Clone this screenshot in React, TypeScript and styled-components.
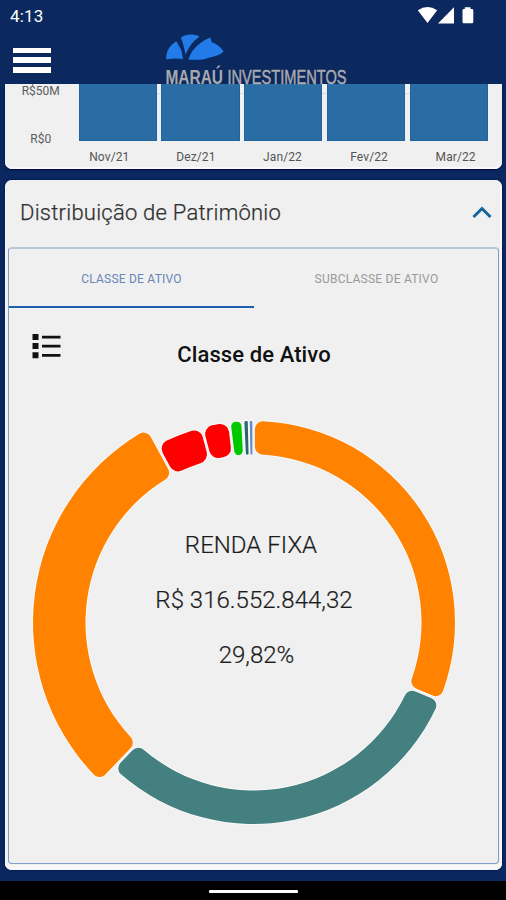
import React from 'react';
import styled, { createGlobalStyle } from 'styled-components';

const GlobalStyle = createGlobalStyle`
  * { box-sizing: border-box; }
  body { margin: 0; background: #0a285f; font-family: Roboto, "Liberation Sans", sans-serif; }
`;

const Screen = styled.div`
  width: 506px;
  height: 900px;
  display: flex;
  flex-direction: column;
  overflow: hidden;
  background: #0a285f;
`;

const Header = styled.header`
  position: relative;
  z-index: 1;
  flex: none;
  height: 84px;
  display: flex;
  flex-direction: column;
  background: #0b295f;
`;

const StatusBar = styled.div`
  height: 32px;
  flex: none;
  display: flex;
  align-items: center;
  justify-content: space-between;
  padding: 0 31px 0 10px;
  color: #fff;
  font-size: 17px;
  font-weight: 400;
  line-height: 32px;
  letter-spacing: 0.2px;
`;

const AppBar = styled.div`
  display: grid;
  grid-template-columns: 153px 190px;
  padding-left: 12px;
  height: 60px;
`;

const MenuButton = styled.button`
  display: flex;
  flex-direction: column;
  gap: 4.6px;
  width: 38px;
  height: 42px;
  padding: 15.5px 0 0 0.5px;
  border: 0;
  background: none;
`;

const MenuLine = styled.span`
  flex: none;
  width: 38px;
  height: 5.4px;
  background: #fff;
`;

const Content = styled.main`
  flex: 1;
  display: flex;
  flex-direction: column;
  gap: 11px;
  padding: 0 4px 0 5px;
`;

const BarsCard = styled.section`
  height: 85px;
  flex: none;
  display: grid;
  grid-template-columns: 73.5px 409.5px;
  grid-template-rows: 57px 28px;
  background: #f0f0f0;
  border-radius: 0 0 7px 7px;
  box-shadow: 0 1px 2px #00063f, inset 0 -2px 0 #f8f8f8;
`;

const Axis = styled.div`
  display: flex;
  flex-direction: column;
  justify-content: space-between;
  align-items: center;
  padding: 1px 2px 0 0;
  height: 62px;
  color: #5c5c5c;
  font-size: 12px;
  line-height: 13px;
`;

const Plot = styled.div`
  display: flex;
  gap: 4.6px;
  background: linear-gradient(#d9dcdf, #d9dcdf) 0 9px / 100% 1px no-repeat;
`;

const Bar = styled.div`
  flex: 1;
  background: #2a6ca4;
  border: 1px solid #1f649e;
  border-top: 0;
`;

const Months = styled.div`
  grid-column: 1 / 3;
  display: grid;
  grid-template-columns: repeat(5, 86.6px);
  padding: 9px 0 0 61px;
  color: #555;
  font-size: 12px;
  line-height: 14px;
  letter-spacing: 0.1px;
  text-align: center;
`;

const Card = styled.section`
  height: 690px;
  flex: none;
  display: flex;
  flex-direction: column;
  padding: 0 3px 6px;
  background: #f0f0f0;
  border-radius: 7px;
  box-shadow: 0 0 2px #00063f, inset 0 -5px 0 #f8f8f8, inset 1px 0 0 #f8f8f8, inset -2px 0 0 #f8f8f8;
`;

const CardHeader = styled.div`
  height: 67px;
  flex: none;
  display: flex;
  align-items: center;
  justify-content: space-between;
  padding: 0 7px 2px 12px;
`;

const CardTitle = styled.h2`
  margin: 0;
  color: #303030;
  font-size: 22px;
  font-weight: 300;
  letter-spacing: 0.24px;
  -webkit-text-stroke: 0.25px #303030;
`;

const Panel = styled.div`
  flex: 1;
  display: flex;
  flex-direction: column;
  border: 1px solid #7f9dc6;
  border-top: 2px solid #b9c6dc;
  border-radius: 4px;
  background: #f0f0f0;
`;

const Tabs = styled.div`
  display: grid;
  grid-template-columns: 245px 245px;
  height: 59px;
  flex: none;
`;

const Tab = styled.div<{ $active?: boolean }>`
  display: flex;
  align-items: center;
  justify-content: center;
  padding-top: ${(p) => (p.$active ? 3 : 1)}px;
  border-bottom: ${(p) => (p.$active ? '2px solid #1d61ae' : '0')};
  color: ${(p) => (p.$active ? '#6884b8' : '#999')};
  font-size: 12px;
  letter-spacing: 0.23px;
`;

const ChartHeader = styled.div`
  height: 75px;
  flex: none;
  display: grid;
  grid-template-columns: 75px 340px 75px;
  padding-top: 24px;
`;

const ListButton = styled.button`
  width: 30px;
  height: 28px;
  margin-left: 23px;
  padding: 0;
  border: 0;
  background: none;
`;

const ChartTitle = styled.h3`
  margin: 0;
  padding-top: 10px;
  color: #111;
  font-size: 22px;
  font-weight: 500;
  line-height: 26px;
  letter-spacing: 0.1px;
  text-align: center;
`;

const Chart = styled.div`
  display: grid;
  width: 490px;
  height: 460px;
  > * { grid-area: 1 / 1; }
`;

const Summary = styled.div`
  display: flex;
  flex-direction: column;
  align-items: center;
  gap: 27px;
  padding-top: 148px;
  color: #1c1c1c;
  font-size: 24px;
  font-weight: 300;
  line-height: 28px;
  -webkit-text-stroke: 0.2px #1c1c1c;
`;

const SummaryLine = styled.span<{ $before?: number; $after?: number }>`
  letter-spacing: 0.02px;
  padding: 0 ${(p) => p.$after ?? 0}px 0 ${(p) => p.$before ?? 0}px;
`;

const NavBar = styled.footer`
  flex: none;
  height: 19px;
  display: flex;
  align-items: center;
  justify-content: center;
  background: #000;
  padding-top: 2px;
`;

const Handle = styled.div`
  width: 89px;
  height: 3px;
  border-radius: 1px;
  background: #fff;
`;

interface Segment {
  start: number;
  end: number;
  color: string;
  outer?: number;
  corner?: number;
  pad?: number;
}

const segments: Segment[] = [
  { start: 0, end: 112.6, color: '#ff8200' },
  { start: 112.6, end: 223.9, color: '#43807f' },
  { start: 223.9, end: 331.4, color: '#ff8200', outer: 220.5 },
  { start: 331.4, end: 345.1, color: '#ff0000', corner: 9 },
  { start: 345.1, end: 353.1, color: '#ff0000', corner: 9 },
  { start: 353.1, end: 356.9, color: '#00c800', corner: 4.5 },
  { start: 357.25, end: 358.5, color: '#2a6670', corner: 0.8, pad: 0.5 },
  { start: 358.85, end: 359.75, color: '#6888c8', corner: 0.5, pad: 0.3 },
];

const CX = 244.5;
const CY = 239.5;
const INNER = 168;

// Ring sector with rounded corners; angles run clockwise from twelve o'clock.
function sectorPath({ start, end, outer = 201.5, corner = 8, pad = 1.4 }: Segment) {
  const rad = Math.PI / 180;
  const point = (r: number, a: number) =>
    `${(CX + r * Math.sin(a)).toFixed(2)} ${(CY - r * Math.cos(a)).toFixed(2)}`;
  const side = (r: number, dir: number) => (dir > 0 ? start : end) * rad + dir * Math.asin(pad / r);
  const inset = (r: number, dir: number) => side(r, dir) + (dir * corner) / r;
  const large = end - start > 180 ? 1 : 0;
  const arc = `A${corner} ${corner} 0 0 1 `;
  return [
    `M${point(outer - corner, side(outer - corner, 1))}`,
    arc + point(outer, inset(outer, 1)),
    `A${outer} ${outer} 0 ${large} 1 ${point(outer, inset(outer, -1))}`,
    arc + point(outer - corner, side(outer - corner, -1)),
    `L${point(INNER + corner, side(INNER + corner, -1))}`,
    arc + point(INNER, inset(INNER, -1)),
    `A${INNER} ${INNER} 0 ${large} 0 ${point(INNER, inset(INNER, 1))}`,
    arc + point(INNER + corner, side(INNER + corner, 1)),
    'Z',
  ].join(' ');
}

const Donut = () => (
  <svg width="490" height="460" viewBox="0 0 490 460">
    {segments.map((s) => (
      <path key={s.start} d={sectorPath(s)} fill={s.color} stroke="#fff" strokeWidth="2" strokeOpacity="0.6" paintOrder="stroke" />
    ))}
  </svg>
);

const Logo = () => (
  <svg width="190" height="60" viewBox="165 32 190 60">
    <g fill="#237bea">
      <path d="M166.3 59.5C165.5 52 170 44.5 176.5 41.3C178 45 181.2 48.5 181.8 52L183 59.2C177.5 57.8 172 58.5 166.3 59.5Z" />
      <path d="M180.8 37.8C186 33.6 194 34 199.6 36.4C192.5 41.5 189.5 46 185.5 54.5C184.2 48 182.8 42 180.8 37.8Z" />
      <path d="M188.5 59.8C191 51.5 196.5 43.5 210.3 37.6L211.8 42.2C217 44 221.2 47 223.6 51.5C221 54.5 216 56 211.5 57L207 58.2C203 60.5 195 59.6 188.5 59.8Z" />
    </g>
    <g fill="#a9a9ad" fontFamily='"Liberation Sans", sans-serif' fontSize="20.5">
      <text x="165.5" y="83.7" fontWeight="700" textLength="57.5" lengthAdjust="spacingAndGlyphs">MARAÚ</text>
      <text x="227.5" y="83.7" textLength="119" lengthAdjust="spacingAndGlyphs" stroke="#a9a9ad" strokeWidth="0.5">INVESTIMENTOS</text>
    </g>
  </svg>
);

const StatusIcons = () => (
  <svg width="58" height="20" viewBox="417 6 58 20" fill="#fff">
    <path d="M417.8 10.2Q427.5 3.8 437.2 10.2L427.5 23Z" />
    <path d="M454 7.2V23.4H438Z" />
    <path d="M464.8 7.2H470.5V9H472Q473.3 9 473.3 10.3V22Q473.3 23.3 472 23.3H463.8Q462.5 23.3 462.5 22V10.3Q462.5 9 463.8 9H464.8Z" />
  </svg>
);

export default function App() {
  return (
    <Screen>
      <GlobalStyle />
      <Header>
        <StatusBar>
          <span>4:13</span>
          <StatusIcons />
        </StatusBar>
        <AppBar>
          <MenuButton aria-label="Menu">
            <MenuLine />
            <MenuLine />
            <MenuLine />
          </MenuButton>
          <Logo />
        </AppBar>
      </Header>
      <Content>
        <BarsCard>
          <Axis>
            <span>R$50M</span>
            <span>R$0</span>
          </Axis>
          <Plot>
            {[0, 1, 2, 3, 4].map((i) => (
              <Bar key={i} />
            ))}
          </Plot>
          <Months>
            {['Nov/21', 'Dez/21', 'Jan/22', 'Fev/22', 'Mar/22'].map((m) => (
              <span key={m}>{m}</span>
            ))}
          </Months>
        </BarsCard>
        <Card>
          <CardHeader>
            <CardTitle>Distribuição de Patrimônio</CardTitle>
            <svg width="20" height="16" viewBox="0 0 20 16" fill="none" stroke="#17639c" strokeWidth="3">
              <path d="M1.5 12L10 3.5L18.5 12" />
            </svg>
          </CardHeader>
          <Panel>
            <Tabs>
              <Tab $active>CLASSE DE ATIVO</Tab>
              <Tab>SUBCLASSE DE ATIVO</Tab>
            </Tabs>
            <ChartHeader>
              <ListButton aria-label="Legenda">
                <svg width="30" height="28" viewBox="0 0 30 28" fill="#111">
                  <path d="M0.5 2h6v6h-6zM0.5 11h6v6h-6zM0.5 20.3h6v6h-6zM10 3.7h18.5v2.8H10zM10 12.8h18.5v2.8H10zM10 21.9h18.5v2.8H10z" />
                </svg>
              </ListButton>
              <ChartTitle>Classe de Ativo</ChartTitle>
            </ChartHeader>
            <Chart>
              <Donut />
              <Summary>
                <SummaryLine $after={6}>RENDA FIXA</SummaryLine>
                <SummaryLine>R$ 316.552.844,32</SummaryLine>
                <SummaryLine $before={5}>29,82%</SummaryLine>
              </Summary>
            </Chart>
          </Panel>
        </Card>
      </Content>
      <NavBar>
        <Handle />
      </NavBar>
    </Screen>
  );
}
